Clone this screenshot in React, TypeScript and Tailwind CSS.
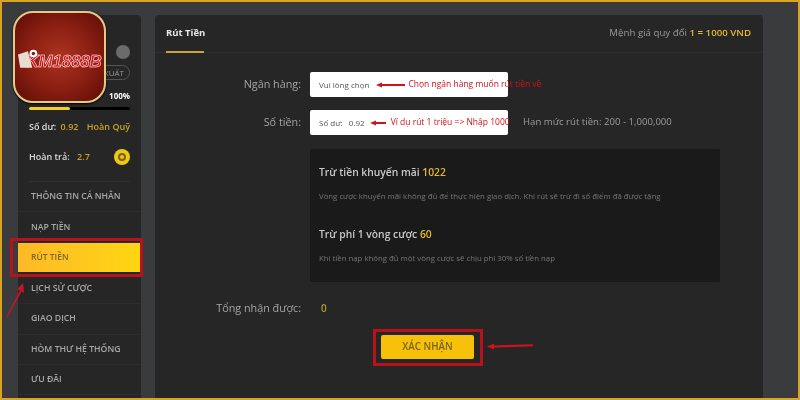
const menuItems = ["THÔNG TIN CÁ NHÂN", "NẠP TIỀN", "RÚT TIỀN", "LỊCH SỬ CƯỢC", "GIAO DỊCH", "HÒM THƯ HỆ THỐNG", "ƯU ĐÃI"];

function RedArrow({ width }: { width: number }) {
  return (
    <svg width={width} height="8" viewBox={`0 0 ${width} 8`} className="shrink-0">
      <path d={`M0 4 L6 1.5 L6 3 L${width} 3 L${width} 5 L6 5 L6 6.5 Z`} fill="#d3101c" />
    </svg>
  );
}

function Sidebar() {
  return (
    <aside className="flex w-[123px] shrink-0 flex-col rounded-t bg-[#262627] px-[11px]">
      <div className="flex h-[167px] flex-col items-end border-b border-[#2f2f30]">
        <div className="mt-[30px] h-[14px] w-[14px] rounded-full bg-[#6b6b6c]"></div>
        <div className="mt-[6px] flex h-[15px] w-[32px] items-center justify-center rounded-full border border-[#555] text-[8px] text-[#999]">XUẤT</div>
        <div className="mt-[10px] text-[8px] font-bold text-white">100%</div>
        <div className="mt-[5px] h-[3px] w-full rounded-full bg-black">
          <div className="h-full w-[41px] rounded-full bg-[#f2cf2e]"></div>
        </div>
        <div className="mt-[10px] flex w-full justify-between text-[9px] font-semibold">
          <span className="text-[#ddd]">Số dư: <span className="ml-[2px] text-[#c9a227]">0.92</span></span>
          <span className="text-[#c9a227]">Hoàn Quỹ</span>
        </div>
        <div className="mt-[15px] flex w-full items-center justify-between text-[9px] font-semibold">
          <span className="text-[#ddd]">Hoàn trả: <span className="ml-[5px] text-[#c9a227]">2.7</span></span>
          <span className="flex h-[16px] w-[16px] items-center justify-center rounded-full bg-[#edc916]">
            <span className="h-[8px] w-[8px] rounded-full border-2 border-[#7a6408]"></span>
          </span>
        </div>
      </div>
      <nav className="-mx-[11px] flex flex-col">
        {menuItems.map((item) =>
          item === "RÚT TIỀN" ? (
            <div key={item} className="mb-[2px] mt-[0.6px] flex h-[28.4px] items-center bg-gradient-to-r from-[#fdb927] to-[#ffd60f] px-[13px] text-[8.5px] font-semibold text-[#80641a]">
              {item}
            </div>
          ) : (
            <div key={item} className="flex h-[30.4px] items-center border-b border-[#2d2d2e] px-[13px] text-[8.7px] font-semibold text-[#a8a8a8]">
              {item}
            </div>
          )
        )}
      </nav>
    </aside>
  );
}

function Logo() {
  return (
    <div className="absolute left-[13px] top-[11px] flex h-[92px] w-[93px] items-center justify-center rounded-[20px] border-2 border-[#e4c987] bg-[radial-gradient(circle,#ab3421_0%,#8c1f12_50%,#5c0d06_100%)] shadow-[0_1px_2px_#000]">
      <svg width="22" height="20" viewBox="0 0 20 18" className="absolute left-[3px] top-[36px]">
        <path d="M0 5 L9 2 L13 17 L2 17 Z" fill="#e8dcd2" />
        <circle cx="14" cy="4" r="3.5" fill="#fff" />
        <circle cx="14" cy="4" r="1.5" fill="#7a1a10" />
      </svg>
      <span className="ml-[9px] mt-[9px] text-[17px] font-bold italic tracking-[-0.2px] text-[#d8141c] [-webkit-text-stroke:0.5px_#fff] [font-family:'Liberation_Sans',sans-serif]">KM1888B</span>
    </div>
  );
}

function Row({ label, children }: { label: string; children: React.ReactNode }) {
  return (
    <div className="flex items-center">
      <div className="w-[146px] text-right text-[10.8px] text-[#a5a5a5]">{label}</div>
      <div className="ml-[9px] flex items-center">{children}</div>
    </div>
  );
}

function MainPanel() {
  return (
    <main className="flex w-[608px] shrink-0 flex-col rounded-t bg-[#262627]">
      <header className="flex h-[38px] items-start justify-between border-b border-[#2e2e2f] px-[11px]">
        <div className="flex h-[38px] flex-col items-start justify-between">
          <span className="mt-[11px] text-[9.5px] font-bold text-[#e6e6e6]">Rút Tiền</span>
          <span className="h-[2px] w-[38px] bg-[#c9a43a]"></span>
        </div>
        <div className="mr-[1px] mt-[11px] text-[9.7px] text-[#999]">
          Mệnh giá quy đổi <span className="font-semibold text-[#e5b92e]">1 = 1000 VND</span>
        </div>
      </header>

      <div className="mt-[19px] flex flex-col">
        <Row label="Ngân hàng:">
          <div className="flex h-[25px] w-[198px] items-center whitespace-nowrap rounded-[2px] bg-white pl-[9px] text-[8px] text-[#555]">
            <span>Vui lòng chọn</span>
            <span className="ml-[7px]"><RedArrow width={29} /></span>
            <span className="ml-[3px] text-[8.5px] font-medium text-[#d3101c]">Chọn ngân hàng muốn rút tiền về</span>
          </div>
        </Row>
        <div className="mt-[13px]">
          <Row label="Số tiền:">
            <div className="flex h-[25px] w-[198px] items-center whitespace-pre rounded-[2px] bg-white pl-[9px] text-[8px] text-[#555]">
              <span>Số dư:   0.92</span>
              <span className="ml-[5px]"><RedArrow width={16} /></span>
              <span className="ml-[5px] text-[8.5px] font-medium text-[#d3101c]">Ví dụ rút 1 triệu =&gt; Nhập 1000</span>
            </div>
            <span className="ml-[15px] text-[9.6px] text-[#9c9c9c]">Hạn mức rút tiền: 200 - 1,000,000</span>
          </Row>
        </div>

        <section className="ml-[155px] mt-[14px] h-[133px] w-[410px] rounded-[2px] bg-[#1a1a1b] pl-[9px] pt-[16px]">
          <h3 className="text-[10.3px] font-semibold leading-[14px] text-[#c8c8c8]">
            Trừ tiền khuyến mãi <span className="text-[#e5b92e]">1022</span>
          </h3>
          <p className="mt-[12px] text-[7.8px] leading-[10px] text-[#777]">
            Vòng cược khuyến mãi không đủ để thực hiện giao dịch. Khi rút sẽ trừ đi số điểm đã được tặng
          </p>
          <h3 className="mt-[26px] text-[10.3px] font-semibold leading-[14px] text-[#c8c8c8]">
            Trừ phí 1 vòng cược <span className="text-[#e5b92e]">60</span>
          </h3>
          <p className="mt-[12px] text-[7.8px] leading-[10px] text-[#777]">
            Khi tiền nạp không đủ một vòng cược sẽ chịu phí 30% số tiền nạp
          </p>
        </section>

        <div className="mt-[18px]">
          <Row label="Tổng nhận được:">
            <span className="ml-[11px] text-[10px] font-semibold text-[#b89a2e]">0</span>
          </Row>
        </div>

        <button className="ml-[226px] mt-[19px] h-[24px] w-[93px] rounded-[2px] bg-[#f6c108] text-[9.8px] font-semibold text-[#7a6420]">
          XÁC NHẬN
        </button>
      </div>
    </main>
  );
}

export default function App() {
  return (
    <div className="relative h-[400px] w-[800px] overflow-hidden blur-[0.5px] [font-family:'Open_Sans',sans-serif]">
      <div className="flex h-full gap-[14px] border-2 border-[#d9a521] bg-[#3a3b3d] pl-[16px] pt-[13px]">
        <Sidebar />
        <MainPanel />
      </div>

      <Logo />

      {/* Red annotations */}
      <div className="absolute left-[10px] top-[238px] h-[39px] w-[133px] border-[3px] border-[#b5121b]"></div>
      <div className="absolute left-[373px] top-[329px] h-[37px] w-[110px] border-[3px] border-[#b5121b]"></div>
      <svg width="60" height="10" viewBox="0 0 60 10" className="absolute left-[485px] top-[341px]">
        <path d="M2 5.5 L9 2.5 L9 4.4 L48 3.2 L48 5.2 L9 6.6 L9 8.5 Z" fill="#d3101c" />
      </svg>
      <svg width="24" height="40" viewBox="0 0 24 40" className="absolute left-[3px] top-[282px]">
        <path d="M20 1 L21 11 L18.6 9.5 L4 36 L3 35.4 L16.8 8.4 L14 7 Z" fill="#c5142a" />
      </svg>
    </div>
  );
}
